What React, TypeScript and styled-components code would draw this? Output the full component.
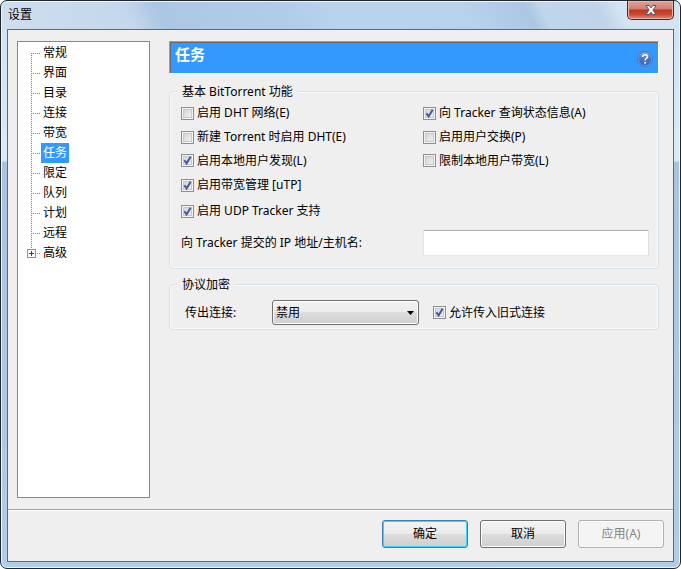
import React, { useId, useState } from 'react';
import styled, { createGlobalStyle, css } from 'styled-components';

const GlobalStyle = createGlobalStyle`
  *, *::before, *::after { box-sizing: border-box; }
  body { margin: 0; background: #fff; }
  body, button, input, select {
    font-family: "Noto Sans", "Noto Sans CJK SC", sans-serif;
    font-size: 12px;
    line-height: 16px;
    color: #000;
  }
`;

const Window = styled.div`
  min-height: 100vh;
  display: flex;
  flex-direction: column;
  padding: 0 6px 6px;
  border: 1px solid #20262c;
  border-radius: 7px;
  box-shadow: inset 0 0 0 1px #eef6fc;
  background:
    linear-gradient(65deg, #d0dfee 0, #c9dbec 50px, #c5d8eb 120px, #abc7e2 150px, #b1cde8 270px, #b9d3ec 310px, #b8d2eb 430px, #abc7e2 485px, #c0d6ea 500px, #bfd4e8 550px, #d3e3f2 570px) top / 100% 29px no-repeat,
    linear-gradient(#cfe1f1 0, #dce9f5 160px, #a6c4e1 161px, #b0cde8 100%);
`;

const TitleBar = styled.header`
  height: 28px;
  display: flex;
  align-items: flex-start;
  justify-content: space-between;
`;

const Title = styled.h1`
  margin: 0;
  padding: 6px 1px;
  font-size: 12px;
  line-height: 16px;
  font-weight: 400;
`;

const CloseButton = styled.button`
  width: 47px;
  height: 19px;
  padding: 0;
  display: flex;
  align-items: center;
  justify-content: center;
  border: 1px solid #5a2020;
  border-top: 0;
  border-radius: 0 0 5px 5px;
  box-shadow: inset 0 0 0 1px #e9b5a8;
  background: linear-gradient(#e0a598 0, #d27d6c 45%, #bc3622 50%, #cb4a34 75%, #e08a78 100%);
`;

const Client = styled.main`
  flex: 1;
  display: flex;
  flex-direction: column;
  border: 1px solid #5b6a78;
  background: #efefef;
`;

const Content = styled.div`
  flex: 1;
  display: flex;
  gap: 19px;
  padding: 11px 14px 11px 9px;
`;

const Tree = styled.ul`
  width: 133px;
  flex: none;
  margin: 0;
  padding: 1px 0 0 13px;
  list-style: none;
  border: 1px solid #828790;
  background: #fff;
`;

const TreeItem = styled.li`
  height: 20px;
  display: flex;
  align-items: center;
`;

const Branch = styled.svg`
  width: 10px;
  height: 20px;
  flex: none;
  overflow: visible;
`;

const TreeLink = styled.a<{ $selected: boolean }>`
  padding: 2px;
  text-decoration: none;
  color: ${p => (p.$selected ? '#fff' : '#000')};
  background: ${p => (p.$selected ? '#3399ff' : 'transparent')};
`;

const Page = styled.section`
  flex: 1;
  min-width: 0;
`;

const Banner = styled.div`
  height: 33px;
  display: flex;
  justify-content: space-between;
  padding: 2px 5px 0;
  border: 1px solid;
  border-color: #a0a0a0 #fff #fff #a0a0a0;
  box-shadow: inset 1px 1px 0 #696969;
  background: #3399ff;
`;

const BannerTitle = styled.h2`
  margin: 0;
  font-size: 15px;
  line-height: 20px;
  font-weight: 700;
  color: #fff;
`;

const HelpButton = styled.button`
  align-self: flex-end;
  width: 16px;
  height: 24px;
  padding: 0;
  border: 0;
  background: none;
`;

const Group = styled.fieldset<{ $first?: boolean }>`
  min-width: 0;
  margin: ${p => (p.$first ? '8px 0 0' : '6px 0 0')};
  padding: ${p => (p.$first ? '1px 9px 12px 11px' : '7px 9px 4px 15px')};
  border: 1px solid #d5dfe5;
  border-radius: 4px;
  box-shadow: inset 0 0 0 1px #fafafa;
`;

const Legend = styled.legend<{ $shift?: boolean }>`
  margin-left: ${p => (p.$shift ? '-8px' : '-4px')};
  padding: 2px 5px 0;
  background: #efefef;
`;

const Options = styled.div`
  display: grid;
  grid-template-columns: 242px 1fr;
  grid-template-rows: 24px 24px 23px 26px 26px;
  align-items: center;
`;

const CheckLabel = styled.label`
  display: flex;
  align-items: center;
  gap: 3px;
  white-space: nowrap;
`;

const Overlay = styled.span`
  display: grid;
  align-items: center;
  & > * { grid-area: 1 / 1; }
  & > svg { pointer-events: none; }
`;

const CheckInput = styled.input`
  appearance: none;
  width: 13px;
  height: 13px;
  margin: 0;
  border: 1px solid #8e8f8f;
  box-shadow: inset 0 0 0 1px #f4f4f4, inset 0 0 0 2px #c4c9cf;
  background: linear-gradient(135deg, #cbcfd5, #f6f6f6);
`;

const FieldRow = styled.div`
  display: grid;
  grid-template-columns: 242px 1fr;
  align-items: center;
  padding-top: 6px;
`;

const TextInput = styled.input`
  width: 100%;
  height: 26px;
  padding: 2px 4px;
  border: 1px solid;
  border-color: #abadb3 #dbdfe6 #e3e9ef #e2e3ea;
  border-radius: 1px;
  background: #fff;
`;

const EncryptionRow = styled.div`
  display: flex;
  align-items: center;
`;

const SelectLabel = styled.label`
  width: 87px;
`;

const Select = styled.select`
  appearance: none;
  width: 147px;
  height: 25px;
  padding: 0 3px;
  border: 1px solid #707070;
  border-radius: 3px;
  box-shadow: inset 0 0 0 1px #fcfcfc;
  background: linear-gradient(#f2f2f2 0, #ebebeb 50%, #dddddd 50%, #cfcfcf 100%);
`;

const Arrow = styled.svg`
  justify-self: end;
  margin-right: 5px;
`;

const LegacyOption = styled.div`
  margin-left: 14px;
`;

const Footer = styled.footer`
  display: flex;
  justify-content: flex-end;
  gap: 12px;
  padding: 10px 9px 13px;
  border-top: 1px solid #a0a0a0;
  box-shadow: inset 0 1px 0 #fff;
`;

const PushButton = styled.button<{ $primary?: boolean }>`
  width: 86px;
  height: 28px;
  padding: 0;
  border: 1px solid #707070;
  border-radius: 3px;
  box-shadow: inset 0 0 0 1px #fcfcfc;
  background: linear-gradient(#f2f2f2 0, #ebebeb 50%, #dddddd 50%, #cfcfcf 100%);
  ${p => p.$primary && css`
    border-color: #3c7fb1;
    box-shadow: inset 0 0 0 1px #40d0f8;
  `}
  &:disabled {
    color: #838383;
    border-color: #adb2b5;
    background: #f4f4f4;
  }
`;

const pages = ['常规', '界面', '目录', '连接', '带宽', '任务', '限定', '队列', '计划', '远程', '高级'];

function TreeBranch({ first, last }: { first: boolean; last: boolean }) {
  return (
    <Branch viewBox="0 0 10 20" aria-hidden="true" shapeRendering="crispEdges">
      <path d={first ? 'M.5 10V20' : last ? 'M.5 0V6' : 'M.5 0V20'} stroke="#808080" strokeDasharray="1 1" />
      <path d="M0 10.5H9" stroke="#808080" strokeDasharray="1 1" />
      {last && (
        <g>
          <rect x="-3.5" y="6.5" width="8" height="8" fill="#fafafa" stroke="#919191" />
          <path d="M-2 10.5H3M.5 8V13" stroke="#27407c" />
        </g>
      )}
    </Branch>
  );
}

function Check({ label, defaultChecked = false }: { label: string; defaultChecked?: boolean }) {
  const [checked, setChecked] = useState(defaultChecked);
  return (
    <CheckLabel>
      <Overlay>
        <CheckInput type="checkbox" checked={checked} onChange={e => setChecked(e.target.checked)} />
        {checked && (
          <svg width="13" height="13" viewBox="0 0 13 13" aria-hidden="true">
            <path d="M3.4 6.2L5.6 9.4L9.6 2.8" fill="none" stroke="#4256a0" strokeWidth="2" />
          </svg>
        )}
      </Overlay>
      {label}
    </CheckLabel>
  );
}

export default function App() {
  const hostId = useId();
  const outgoingId = useId();
  const [page, setPage] = useState('任务');
  return (
    <>
      <GlobalStyle />
      <Window>
        <TitleBar>
          <Title>设置</Title>
          <CloseButton type="button" aria-label="关闭">
            <svg width="12" height="10" viewBox="0 0 12 10" aria-hidden="true">
              <path d="M1 .5H4L6 2.8L8 .5H11L7.9 5L11 9.5H8L6 7.2L4 9.5H1L4.1 5Z" fill="#fff" stroke="#535666" />
            </svg>
          </CloseButton>
        </TitleBar>
        <Client>
          <Content>
            <Tree>
              {pages.map((name, i) => (
                <TreeItem key={name}>
                  <TreeBranch first={i === 0} last={i === pages.length - 1} />
                  <TreeLink
                    href={`#${name}`}
                    $selected={name === page}
                    aria-current={name === page ? 'page' : undefined}
                    onClick={() => setPage(name)}
                  >
                    {name}
                  </TreeLink>
                </TreeItem>
              ))}
            </Tree>
            <Page>
              <Banner>
                <BannerTitle>任务</BannerTitle>
                <HelpButton type="button" aria-label="帮助">
                  <svg width="16" height="16" viewBox="0 0 16 16" aria-hidden="true">
                    <defs>
                      <linearGradient id="help-fill" x2="0" y2="1">
                        <stop stopColor="#7f9fda" />
                        <stop offset=".5" stopColor="#4a70c0" />
                        <stop offset="1" stopColor="#3c66b8" />
                      </linearGradient>
                    </defs>
                    <circle cx="8" cy="8" r="7.4" fill="#7fa6e4" stroke="#3a66b4" strokeWidth=".8" />
                    <circle cx="8" cy="8" r="6.3" fill="url(#help-fill)" />
                    <path d="M5.6 6C5.6 2.9 10.5 3 10.5 5.7C10.5 7.5 8.1 7.4 8.1 9.5" fill="none" stroke="#fff" strokeWidth="1.5" />
                    <circle cx="8.1" cy="11.7" r="1" fill="#fff" />
                  </svg>
                </HelpButton>
              </Banner>
              <Group $first>
                <Legend>基本 BitTorrent 功能</Legend>
                <Options>
                  <Check label="启用 DHT 网络(E)" />
                  <Check label="向 Tracker 查询状态信息(A)" defaultChecked />
                  <Check label="新建 Torrent 时启用 DHT(E)" />
                  <Check label="启用用户交换(P)" />
                  <Check label="启用本地用户发现(L)" defaultChecked />
                  <Check label="限制本地用户带宽(L)" />
                  <Check label="启用带宽管理 [uTP]" defaultChecked />
                  <span />
                  <Check label="启用 UDP Tracker 支持" defaultChecked />
                </Options>
                <FieldRow>
                  <label htmlFor={hostId}>向 Tracker 提交的 IP 地址/主机名:</label>
                  <TextInput id={hostId} type="text" />
                </FieldRow>
              </Group>
              <Group>
                <Legend $shift>协议加密</Legend>
                <EncryptionRow>
                  <SelectLabel htmlFor={outgoingId}>传出连接:</SelectLabel>
                  <Overlay>
                    <Select id={outgoingId} defaultValue="禁用">
                      <option>禁用</option>
                      <option>启用</option>
                      <option>强制</option>
                    </Select>
                    <Arrow width="7" height="4" viewBox="0 0 7 4" aria-hidden="true">
                      <path d="M0 0H7L3.5 4Z" />
                    </Arrow>
                  </Overlay>
                  <LegacyOption>
                    <Check label="允许传入旧式连接" defaultChecked />
                  </LegacyOption>
                </EncryptionRow>
              </Group>
            </Page>
          </Content>
          <Footer>
            <PushButton type="button" $primary>确定</PushButton>
            <PushButton type="button">取消</PushButton>
            <PushButton type="button" disabled>应用(A)</PushButton>
          </Footer>
        </Client>
      </Window>
    </>
  );
}
